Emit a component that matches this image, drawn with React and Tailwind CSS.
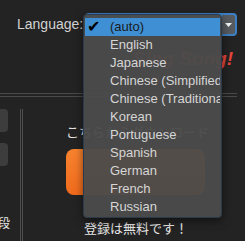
const languages = [
  'English',
  'Japanese',
  'Chinese (Simplified)',
  'Chinese (Traditional)',
  'Korean',
  'Portuguese',
  'Spanish',
  'German',
  'French',
  'Russian',
];

function LanguageMenu() {
  return (
    <div className="absolute left-[83px] top-[14px] w-[139px] rounded-[4px] border border-[#2b3a4a] bg-[#4b4b4b]/[0.96] px-[1px] pb-[1px] pt-[3px] shadow-[0_3px_8px_rgba(0,0,0,0.5)]">
      <div className="flex h-[18px] items-center overflow-hidden whitespace-nowrap bg-[#3e8fd3] text-[#1b1b1b]">
        <span className="w-[25px] pl-[2px] font-['DejaVu_Sans',sans-serif] text-[16px] leading-none text-black">✔</span>
        <span>(auto)</span>
      </div>
      {languages.map((lang) => (
        <div key={lang} className="flex h-[18px] items-center overflow-hidden whitespace-nowrap pl-[25px] text-[#d6d6d6]">
          {lang}
        </div>
      ))}
    </div>
  );
}

export default function App() {
  return (
    <div className="relative h-[241px] w-[245px] overflow-hidden bg-[#232323] font-['Liberation_Sans',Arial,sans-serif] text-[13px]">
      <div className="flex items-center pl-[17px] pt-[13px]">
        <span className="text-[14px] text-[#d2d2d2]">Language:</span>
        <div className="ml-[2px] flex h-[23px] w-[152px] overflow-hidden rounded-[4px] border-2 border-[#3b7fc4] bg-[#3e8fd3]">
          <div className="flex-1" />
          <div className="flex w-[13px] items-center justify-center bg-[#575b60]">
            <svg width="7" height="4" viewBox="0 0 7 4">
              <path d="M0 0h7L3.5 4z" fill="#f2f2f2" />
            </svg>
          </div>
        </div>
      </div>

      <div className="mt-[13px] pr-[12px] text-right text-[19px] font-bold italic leading-[20px] text-[#e2453a]">
        Sing Song!
      </div>

      <div className="mr-[8px] mt-[24px] h-[4px] border-y border-[#4a4a4a]" />

      <div className="mt-[12px] flex">
        <div className="-ml-[12px] flex w-[20px] flex-col">
          <div className="h-[23px] rounded-[4px] bg-[#3d3d3d]" />
          <div className="mt-[11px] h-[23px] rounded-[4px] bg-[#3d3d3d]" />
          <div className="mt-[51px] pl-[10px] font-['Noto_Sans_CJK_JP',sans-serif] text-[12px] leading-[12px] text-[#e6e6e6]">
            段
          </div>
        </div>
        <div className="ml-[12px] h-[140px] w-[3px] border-x border-[#4d4d4d]" />
        <div className="ml-[43px] flex flex-col">
          <div className="mt-[15px] whitespace-nowrap font-['Noto_Sans_CJK_JP',sans-serif] text-[13px] leading-[15px] text-[#e2e2e2]">
            こちらからダウンロード
          </div>
          <div className="mt-[10px] h-[46px] w-[139px] rounded-[8px] bg-gradient-to-b from-[#f7822e] to-[#f06a1c]" />
          <div className="ml-[18px] mt-[26px] whitespace-nowrap font-['Noto_Sans_CJK_JP',sans-serif] text-[13px] leading-[13px] text-[#e6e6e6]">
            登録は無料です！
          </div>
        </div>
      </div>

      <LanguageMenu />
    </div>
  );
}
